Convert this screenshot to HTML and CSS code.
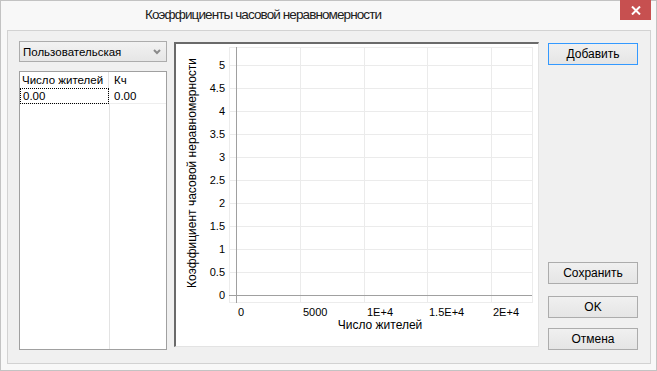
FILE: index.html
```html
<!DOCTYPE html>
<html lang="ru">
<head>
  <meta charset="UTF-8" />
  <title>Коэффициенты часовой неравномерности</title>
  <link rel="stylesheet" href="styles.css">
</head>
<body>

  <div class="window">
    <div class="titlebar">
      <div class="title">Коэффициенты часовой неравномерности</div>
      <div class="close">
        <svg width="10" height="9" viewBox="0 0 10 9"><path d="M1 0.5 L9 8.5 M9 0.5 L1 8.5" stroke="#fff" stroke-width="2"/></svg>
      </div>
    </div>

    <div class="panel">
      <div class="left">
        <div class="combo">
          <span>Пользовательская</span>
          <svg width="8" height="6" viewBox="0 0 8 6"><path d="M1 1 L4 4 L7 1" fill="none" stroke="#8a8a8a" stroke-width="2"/></svg>
        </div>
        <div class="grid">
          <div class="grid-head">
            <div class="cell c1">Число жителей</div>
            <div class="cell c2">Кч</div>
          </div>
          <div class="grid-row">
            <div class="cell c1 focus">0.00</div>
            <div class="cell c2">0.00</div>
          </div>
          <div class="grid-rest">
            <div class="c1"></div>
            <div class="c2"></div>
          </div>
        </div>
      </div>

      <div class="chart">
        <svg width="362" height="302" viewBox="0 0 362 302">
          <rect x="53.5" y="3.5" width="303" height="255" fill="#fff" stroke="#ececec"/>
          <g stroke="#ebebeb">
            <line x1="53" y1="21.5" x2="356" y2="21.5"/>
            <line x1="53" y1="44.5" x2="356" y2="44.5"/>
            <line x1="53" y1="67.5" x2="356" y2="67.5"/>
            <line x1="53" y1="90.5" x2="356" y2="90.5"/>
            <line x1="53" y1="113.5" x2="356" y2="113.5"/>
            <line x1="53" y1="136.5" x2="356" y2="136.5"/>
            <line x1="53" y1="159.5" x2="356" y2="159.5"/>
            <line x1="53" y1="182.5" x2="356" y2="182.5"/>
            <line x1="53" y1="205.5" x2="356" y2="205.5"/>
            <line x1="53" y1="228.5" x2="356" y2="228.5"/>
            <line x1="124.5" y1="3" x2="124.5" y2="258"/>
            <line x1="188.5" y1="3" x2="188.5" y2="258"/>
            <line x1="251.5" y1="3" x2="251.5" y2="258"/>
            <line x1="315.5" y1="3" x2="315.5" y2="258"/>
          </g>
          <g stroke="#a0a0a0">
            <line x1="60.5" y1="3" x2="60.5" y2="259"/>
            <line x1="53" y1="251.5" x2="356" y2="251.5"/>
          </g>
          <g class="ticks" text-anchor="end">
            <text x="49" y="25">5</text>
            <text x="49" y="48">4.5</text>
            <text x="49" y="71">4</text>
            <text x="49" y="94">3.5</text>
            <text x="49" y="117">3</text>
            <text x="49" y="140">2.5</text>
            <text x="49" y="163">2</text>
            <text x="49" y="186">1.5</text>
            <text x="49" y="209">1</text>
            <text x="49" y="232">0.5</text>
            <text x="49" y="255">0</text>
          </g>
          <g class="ticks">
            <text x="62" y="272">0</text>
            <text x="127" y="272">5000</text>
            <text x="191" y="272">1E+4</text>
            <text x="253" y="272">1.5E+4</text>
            <text x="317" y="272">2E+4</text>
          </g>
          <text class="axis-title" x="204" y="285" text-anchor="middle">Число жителей</text>
          <text class="axis-title" transform="translate(20,129) rotate(-90)" text-anchor="middle">Коэффициент часовой неравномерности</text>
        </svg>
      </div>

      <div class="buttons">
        <button class="btn default">Добавить</button>
        <div class="spacer"></div>
        <button class="btn save">Сохранить</button>
        <button class="btn ok">OK</button>
        <button class="btn cancel">Отмена</button>
      </div>
    </div>
  </div>

</body>
</html>
```

FILE: styles.css
```css
body {
  margin: 0;
  font-family: 'Liberation Sans', Arial, sans-serif;
  font-size: 11.5px;
  color: #000;
}

.window {
  width: 657px;
  height: 371px;
  box-sizing: border-box;
  border: 1px solid #c3c3c3;
  background-color: #f8f8f8;
  display: flex;
  flex-direction: column;
}

.titlebar {
  height: 29px;
  display: flex;
  align-items: flex-start;
}

.title {
  flex: 1;
  padding-left: 144px;
  padding-top: 6px;
  font-family: 'Liberation Sans', Arial, sans-serif;
  font-size: 13.5px;
  letter-spacing: -0.9px;
  color: #202020;
}

.close {
  width: 31px;
  height: 20px;
  margin-top: -1px;
  margin-right: 5px;
  background-color: #c75050;
  display: flex;
  align-items: center;
  justify-content: center;
}

.panel {
  height: 334px;
  box-sizing: border-box;
  margin: 0 5px 0 6px;
  border: 1px solid #d2d2d2;
  background-color: #f0f0f0;
  padding: 10px 11px 13px 11px;
  display: flex;
}

/* left column */
.left {
  width: 148px;
  display: flex;
  flex-direction: column;
}

.combo {
  height: 21px;
  box-sizing: border-box;
  border: 1px solid #acacac;
  background: linear-gradient(#f2f2f2, #e6e6e6);
  display: flex;
  align-items: center;
  justify-content: space-between;
  padding: 0 3px 0 3px;
}

.combo svg {
  margin-right: 2px;
}

.grid {
  flex: 1;
  margin-top: 9px;
  border: 1px solid #a0a0a0;
  background-color: #fff;
  display: flex;
  flex-direction: column;
}

.grid-head,
.grid-row,
.grid-rest {
  display: flex;
}

.grid-rest {
  flex: 1;
}

.c1 {
  width: 89px;
  border-right: 1px solid #e3e3e3;
}

.c2 {
  flex: 1;
}

.cell {
  height: 16px;
  line-height: 16px;
  padding-left: 2px;
  box-sizing: border-box;
}

.cell.c2 {
  padding-left: 5px;
}

.grid-row .cell {
  border-bottom: 1px solid #eeeeee;
}

.focus {
  outline: 1px dotted #000;
  outline-offset: -1px;
  padding-left: 3px;
}

/* chart */
.chart {
  width: 365px;
  height: 305px;
  box-sizing: border-box;
  margin: 1px 0 0 7px;
  border-top: 2px solid #6a6a6a;
  border-left: 2px solid #6a6a6a;
  border-right: 1px solid #e3e3e3;
  border-bottom: 1px solid #e3e3e3;
  background-color: #fff;
}

.chart svg {
  display: block;
}

.ticks text {
  font-family: 'Liberation Sans', Arial, sans-serif;
  font-size: 11px;
  fill: #000;
}

.axis-title {
  font-family: 'Liberation Sans', Arial, sans-serif;
  font-size: 12px;
  fill: #000;
}

/* buttons */
.buttons {
  width: 90px;
  margin-left: 9px;
  display: flex;
  flex-direction: column;
}

.spacer {
  flex: 1;
}

.btn {
  height: 22px;
  border: 1px solid #acacac;
  background: linear-gradient(#f0f0f0, #e5e5e5);
  font-family: 'Liberation Sans', Arial, sans-serif;
  font-size: 12px;
  color: #000;
  padding: 0;
}

.btn.default {
  margin-top: 2px;
  border-color: #3399ff;
}

.btn.ok {
  margin-top: 12px;
}

.btn.cancel {
  margin-top: 10px;
}
```
